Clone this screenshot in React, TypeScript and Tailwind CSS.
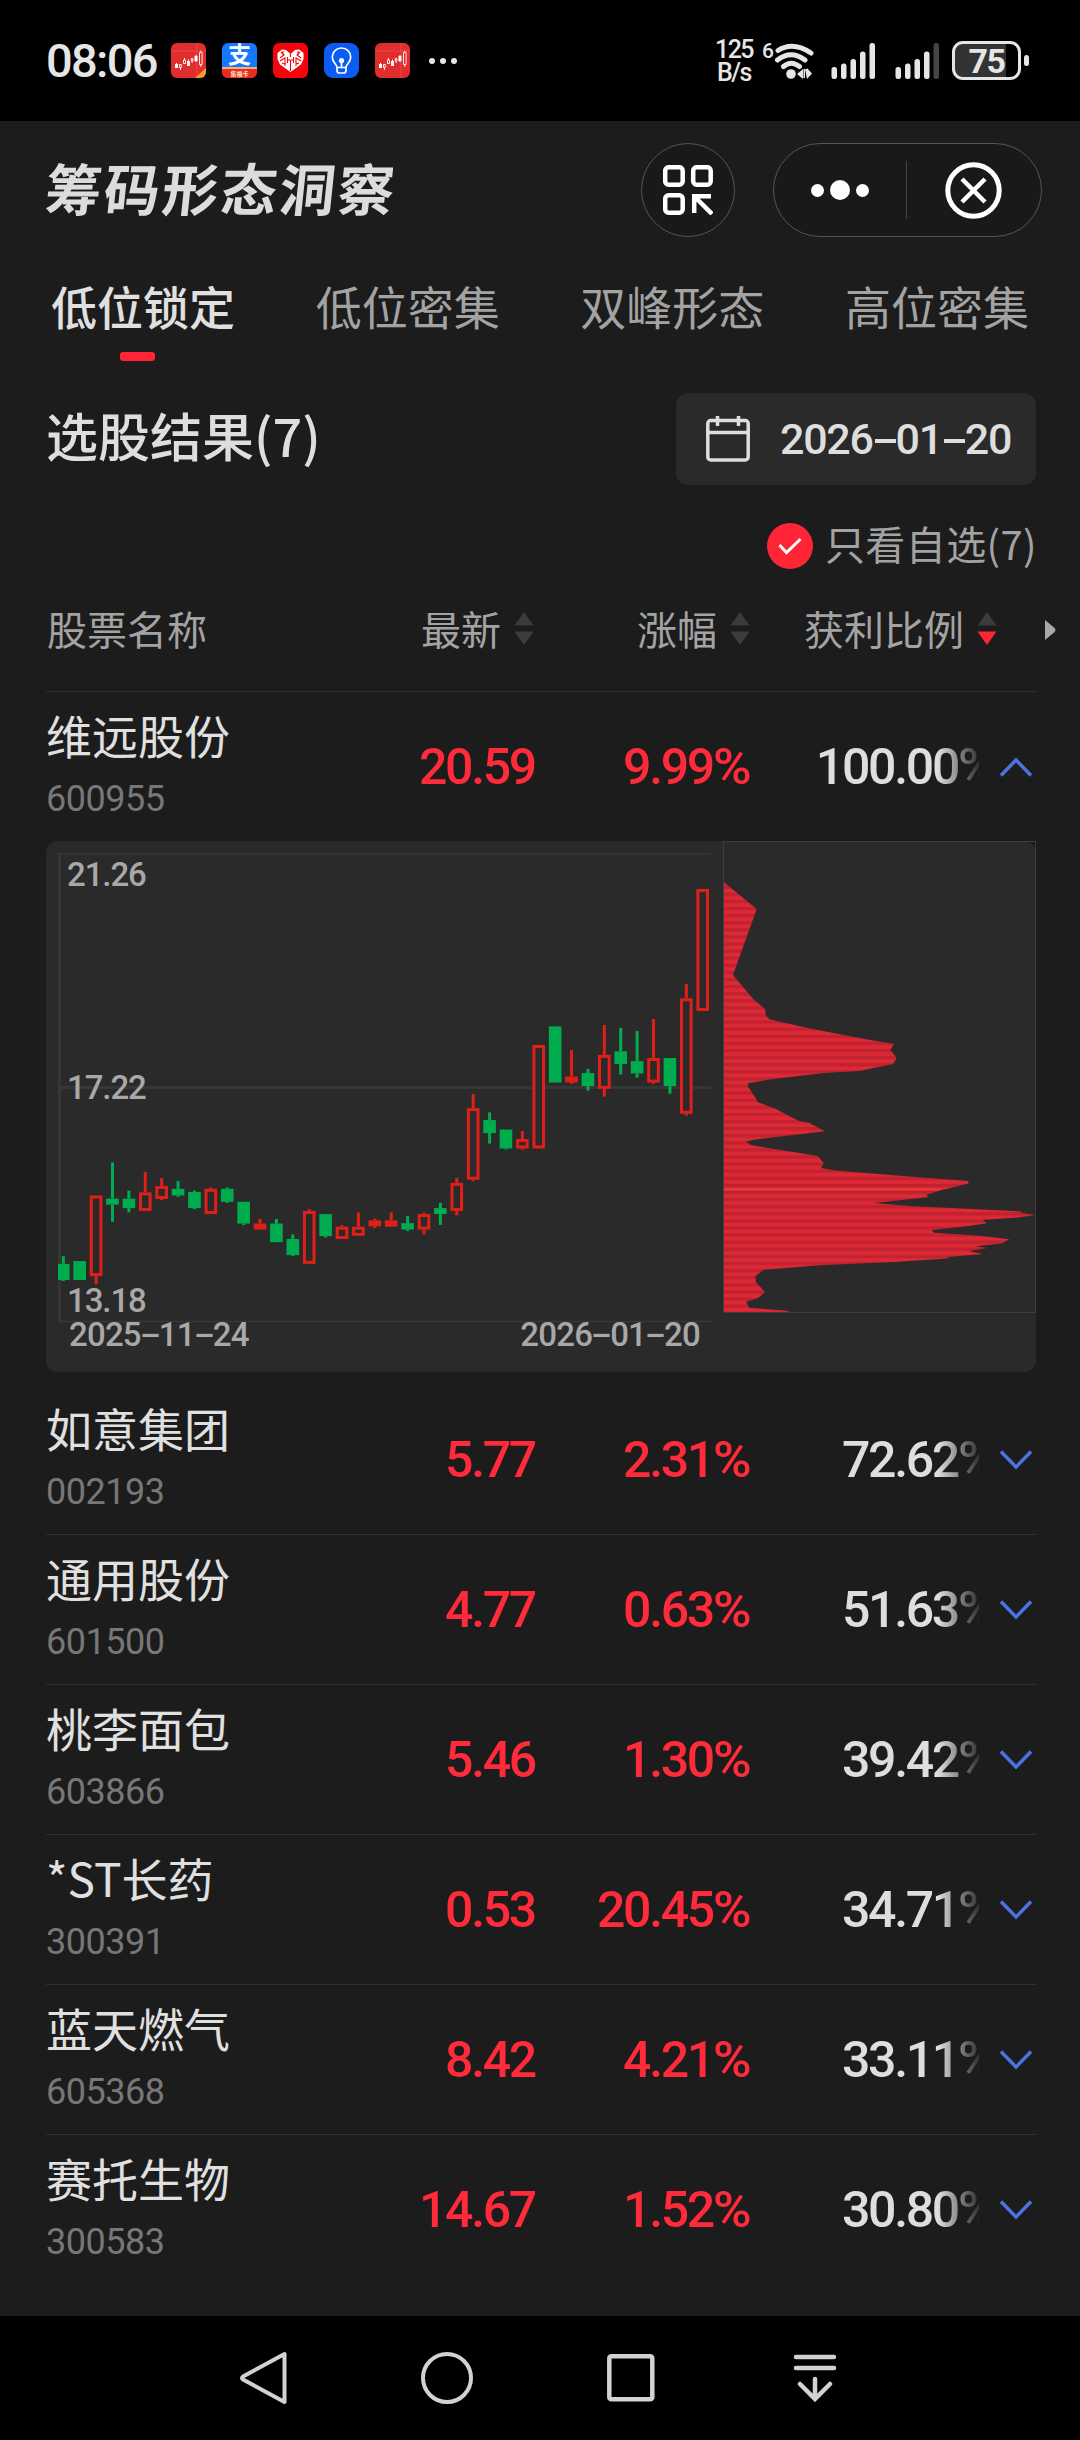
import { clsx } from 'clsx';

interface Stock {
    name: string;
    code: string;
    price: string;
    change: string;
    profit: string;
}

type Candle = ['up' | 'down', number, number, number, number];

const TABS = ['低位锁定', '低位密集', '双峰形态', '高位密集'];

const STOCKS: Stock[] = [
    { name: '维远股份', code: '600955', price: '20.59', change: '9.99', profit: '100.00' },
    { name: '如意集团', code: '002193', price: '5.77', change: '2.31', profit: '72.62' },
    { name: '通用股份', code: '601500', price: '4.77', change: '0.63', profit: '51.63' },
    { name: '桃李面包', code: '603866', price: '5.46', change: '1.30', profit: '39.42' },
    { name: '*ST长药', code: '300391', price: '0.53', change: '20.45', profit: '34.71' },
    { name: '蓝天燃气', code: '605368', price: '8.42', change: '4.21', profit: '33.11' },
    { name: '赛托生物', code: '300583', price: '14.67', change: '1.52', profit: '30.80' },
];

// direction, wick top, body top, body bottom, wick bottom
const CANDLES: Candle[] = [
    ['down', 1215, 1237, 1283, 1286],
    ['down', 1229, 1229, 1283, 1283],
    ['up', 1042, 1042, 1272, 1295],
    ['down', 948, 1051, 1068, 1117],
    ['down', 1028, 1051, 1078, 1090],
    ['up', 975, 1033, 1086, 1086],
    ['up', 992, 1015, 1052, 1055],
    ['down', 1001, 1023, 1042, 1046],
    ['down', 1028, 1032, 1078, 1081],
    ['up', 1019, 1023, 1095, 1095],
    ['down', 1019, 1023, 1060, 1063],
    ['down', 1060, 1060, 1122, 1126],
    ['up', 1109, 1122, 1139, 1139],
    ['down', 1109, 1122, 1175, 1175],
    ['down', 1153, 1166, 1212, 1215],
    ['up', 1081, 1086, 1237, 1237],
    ['down', 1095, 1095, 1158, 1162],
    ['up', 1126, 1131, 1166, 1166],
    ['up', 1090, 1131, 1157, 1157],
    ['up', 1108, 1113, 1130, 1135],
    ['up', 1090, 1113, 1131, 1131],
    ['down', 1100, 1121, 1139, 1143],
    ['up', 1091, 1095, 1139, 1153],
    ['down', 1063, 1078, 1095, 1126],
    ['up', 992, 1006, 1086, 1099],
    ['up', 753, 793, 997, 1001],
    ['down', 805, 827, 864, 894],
    ['down', 854, 854, 908, 911],
    ['up', 858, 881, 908, 911],
    ['up', 613, 613, 908, 908],
    ['down', 560, 560, 720, 720],
    ['up', 627, 703, 720, 724],
    ['down', 681, 693, 730, 743],
    ['up', 556, 641, 738, 760],
    ['down', 564, 631, 667, 697],
    ['down', 573, 659, 694, 706],
    ['up', 539, 650, 720, 724],
    ['down', 650, 650, 730, 752],
    ['up', 439, 480, 809, 814],
    ['up', 168, 168, 516, 516],
];

// outline of the chip distribution, width then depth
const CHIPS = [
    [41, 148], [140, 225], [69, 413], [132, 485], [165, 510], [168, 530], [180, 540], [300, 566], [480, 599],
    [552, 610], [541, 627], [560, 650], [549, 667], [448, 687], [340, 693], [180, 711], [114, 722], [114, 732],
    [133, 758], [144, 776], [195, 794], [265, 829], [295, 834], [345, 859], [130, 883], [108, 889], [124, 899],
    [323, 929], [341, 949], [333, 964], [375, 971], [560, 985], [774, 1001], [776, 1008], [690, 1028], [648, 1041],
    [657, 1046], [555, 1057], [491, 1063], [600, 1072], [800, 1081], [928, 1087], [938, 1092], [976, 1098],
    [925, 1105], [818, 1112], [831, 1121], [765, 1130], [665, 1140], [672, 1148], [810, 1157], [898, 1167],
    [876, 1179], [795, 1187], [831, 1192], [777, 1201], [820, 1209], [715, 1217], [712, 1222], [550, 1232],
    [330, 1241], [162, 1254], [137, 1271], [137, 1287], [165, 1318], [143, 1335], [108, 1345], [118, 1362],
    [236, 1371], [236, 1374], [41, 1374],
];

const toY = (v: number) => v / 2.851 - 11;
const chipPoints = CHIPS.map(([x, v]) => `${(664 + x / 3).toFixed(1)},${toY(v).toFixed(1)}`).join(' ');

function StockAppIcon({ badge }: { badge?: boolean }) {
    return (
        <svg width="35" height="35" viewBox="0 0 35 35">
            <rect width="35" height="35" rx="6" fill="#e22d2f" />
            <path d="M0 8h35M26 0v35" stroke="#ee5a58" strokeWidth="0.6" />
            <g fill="#fff">
                <path d="M4 21h3v4H4zM5 20h1v1H5zM16 18h3v5h-3zM17 16.500h1v2h-1zM23.500 13h3v5h-3zM24.500 12h1v7h-1z" />
            </g>
            <path d="M8.500 21.500h1.800v3h-1.800zM9.400 27v-2M12.500 17h2v3.500h-2zM13.500 17v-2M20.300 15.500h1.600v2.500h-1.600zM21.100 20v-2M28.500 9.500h2.600v12h-2.600zM29.800 9V7.500M29.800 22v2" fill="none" stroke="#fff" strokeWidth="0.900" />
            {badge && <path d="M35 25v4a6 6 0 0 1-6 6h-5z" fill="#f5a01e" />}
        </svg>
    );
}

function AlipayIcon() {
    return (
        <div className="flex h-[35px] w-[35px] flex-col overflow-hidden rounded-md bg-[#1677ff] text-center font-bold text-white">
            <div className="h-6 text-[23px] leading-[21px]">支</div>
            <div className="h-[11px] border-t-2 border-[#f0b27a] bg-[#ee2a1e] text-[6px] leading-[9px] text-[#ffe9c8]">集福卡</div>
        </div>
    );
}

function HeartIcon() {
    return (
        <svg width="35" height="35" viewBox="0 0 35 35">
            <rect width="35" height="35" rx="6" fill="#f5040c" />
            <path d="M17.500 29 7 21.500 4.500 16V10L9 6.500l4 .5 4.500 4 4.500-4 4-.5 4.500 3.500v6L28 21.500z" fill="#fff" />
            <path d="M17.500 10v4M14.500 14v6M20.500 14v6M17.500 17v11M14 17h7M8 9l3 3-4 3M27 9l-3 3 4 3M7 18l5-3v8M28 18l-5-3v8M10 8v4M25 8v4M9 20l3 1M26 20l-3 1" fill="none" stroke="#f5040c" strokeWidth="1.100" />
        </svg>
    );
}

function BulbIcon() {
    return (
        <svg width="35" height="35" viewBox="0 0 35 35">
            <rect width="35" height="35" rx="9" fill="#0b5cf5" />
            <g fill="none" stroke="#fff" strokeWidth="1.700">
                <path d="M13 24.500c0-3-4.700-5-4.700-10.300a9.200 9.200 0 0 1 18.400 0c0 5.300-4.700 7.300-4.700 10.300zM13 24.500v3q0 2.500 2.500 2.500h4q2.500 0 2.500-2.500v-3M17.500 18v6" />
            </g>
            <circle cx="17.500" cy="17.500" r="2.600" fill="#fff" />
        </svg>
    );
}

function SignalIcon({ weak }: { weak?: boolean }) {
    return (
        <svg width="45" height="36" viewBox="0 0 45 36" fill="#e6e6e6">
            <rect x="0.500" y="24" width="5.500" height="12" rx="2.500" />
            <rect x="10" y="20.500" width="5.500" height="15.500" rx="2.500" />
            <rect x="19.500" y="16" width="5.500" height="20" rx="2.500" />
            <rect x="29" y="8.500" width="5.500" height="27.500" rx="2.500" />
            <rect x="38.500" y="0" width="5.500" height="36" rx="2.500" fill={weak ? '#444' : '#e6e6e6'} />
        </svg>
    );
}

function StatusBar() {
    return (
        <div className="flex h-[121px] items-center bg-black pl-[46px] pr-[51px] text-[#e6e6e6]">
            <div className="w-[125px] whitespace-nowrap font-[Roboto] text-[47px] font-medium leading-[56px] tracking-[-1.7px]">08:06</div>
            <div className="flex gap-4">
                <StockAppIcon badge />
                <AlipayIcon />
                <HeartIcon />
                <BulbIcon />
                <StockAppIcon />
            </div>
            <div className="ml-[19px] mt-px flex gap-[5px]">
                <i className="h-1.5 w-1.5 rounded-full bg-[#e6e6e6]" />
                <i className="h-1.5 w-1.5 rounded-full bg-[#e6e6e6]" />
                <i className="h-1.5 w-1.5 rounded-full bg-[#e6e6e6]" />
            </div>
            <div className="ml-auto flex items-center">
                <div className="w-[42px] text-center font-[Roboto] text-[25px] font-medium leading-[23px] tracking-[-1.5px]">
                    <div>125</div>
                    <div>B/s</div>
                </div>
                <div className="mb-5 ml-[7px] w-[13px] font-[Roboto] text-[21px] font-medium leading-6">6</div>
                <svg width="40" height="36" viewBox="0 0 40 36" fill="none" stroke="#e6e6e6" strokeWidth="5" strokeLinecap="round">
                    <path d="M3 7.500Q18 -2 36 10M2.500 17Q16 6.500 30 17M8.500 23.500Q16 17 24.500 23.500" />
                    <circle cx="16" cy="31" r="4.800" fill="#e6e6e6" stroke="none" />
                    <path d="M22 31l6-5v10zM30 26h2v-1l5 5.500-5 5.500zM28.500 26h1.500v9h-1.500z" fill="#e6e6e6" stroke="none" />
                </svg>
                <div className="ml-4 flex gap-[19px]">
                    <SignalIcon />
                    <SignalIcon weak />
                </div>
                <div className="ml-3 flex h-[39px] w-[69px] items-center rounded-[11px] border-[3px] border-[#e6e6e6] bg-[linear-gradient(90deg,#333_51px,#000_51px)]">
                    <span className="w-[63px] text-center font-[Roboto] text-[34px] font-bold leading-none tracking-[-1.5px]">75</span>
                </div>
                <i className="ml-[3px] h-[11px] w-[5px] rounded-sm bg-[#e6e6e6]" />
            </div>
        </div>
    );
}

function TitleBar() {
    return (
        <div className="flex h-[138px] items-center pl-[46px] pr-[38px]">
            <h1 className="mb-1.5 -skew-x-6 text-[56px] font-bold leading-[68px] tracking-[2.5px] text-[#dcdcdc]">筹码形态洞察</h1>
            <button className="ml-auto flex h-[94px] w-[94px] items-center justify-center rounded-full border border-[#555] bg-[#191919]">
                <svg width="50" height="50" viewBox="0 0 50 50" fill="none" stroke="#fff" strokeWidth="4.500">
                    <rect x="2.200" y="2.200" width="17.500" height="17.500" rx="3.500" />
                    <rect x="30.200" y="2.200" width="17.500" height="17.500" rx="3.500" />
                    <rect x="2.200" y="30.200" width="17.500" height="17.500" rx="3.500" />
                    <path d="M31.200 48V31.200H48M32 32l17 17" />
                </svg>
            </button>
            <div className="ml-[38px] flex h-[94px] w-[269px] items-center rounded-full border border-[#555] bg-[#191919]">
                <div className="flex w-[132px] items-center justify-center gap-1.5">
                    <i className="h-[13px] w-[13px] rounded-full bg-white" />
                    <i className="h-5 w-5 rounded-full bg-white" />
                    <i className="h-[13px] w-[13px] rounded-full bg-white" />
                </div>
                <div className="h-[58px] w-px bg-[#444]" />
                <div className="flex w-[132px] justify-center">
                    <svg width="57" height="57" viewBox="0 0 57 57" fill="none" stroke="#fff" strokeWidth="5">
                        <circle cx="28.500" cy="28.500" r="25.700" />
                        <path d="M17 17l23 23M40 17L17 40" strokeWidth="4.500" />
                    </svg>
                </div>
            </div>
        </div>
    );
}

function SortArrows({ desc }: { desc?: boolean }) {
    return (
        <svg width="20" height="33" viewBox="0 0 20 33">
            <path d="M10 0l9.500 13.500H.5z" fill="#3c3c3c" />
            <path d="M.5 19.500h19L10 33z" fill={desc ? '#ff2436' : '#3c3c3c'} />
        </svg>
    );
}

function DateLabel({ value, className, dash }: { value: string; className: string; dash: string }) {
    return (
        <span className={clsx('flex items-center whitespace-nowrap font-[Roboto]', className)}>
            {value.split('-').map((part, i) => (
                <span key={i} className="flex items-center">
                    {i > 0 && <span className={clsx('inline-block scale-x-[1.900] text-center', dash)}>-</span>}
                    {part}
                </span>
            ))}
        </span>
    );
}

function ChipChart() {
    return (
        <div className="relative mb-[13px] h-[531px] w-[990px]">
            <svg width="990" height="531" viewBox="0 0 990 531">
                <defs>
                    <pattern id="stripes" y="2" width="8" height="7.100" patternUnits="userSpaceOnUse">
                        <rect width="8" height="7.100" fill="#dd2836" />
                        <rect width="8" height="3.300" fill="#c1222f" />
                    </pattern>
                </defs>
                <rect width="990" height="531" rx="12" fill="#2a2a2a" />
                <path d="M12 13H665M12 480.500H665" stroke="#383838" strokeWidth="1.500" />
                <path d="M12 246.400H665M13.500 12.500V481" stroke="#363636" strokeWidth="3" />
                {CANDLES.map(([dir, high, top, bottom, low], i) => {
                    const x = 17.300 + i * 16.395;
                    const left = i === 0 ? 12 : x - 6.300;
                    const up = dir === 'up';
                    const color = up ? '#e02018' : '#00ad4e';
                    const y = toY(top);
                    const h = toY(bottom) - y;
                    return (
                        <g key={i} fill={color}>
                            <rect x={x - 1.500} y={toY(high)} width={3} height={toY(top) - toY(high)} />
                            <rect x={x - 1.500} y={toY(bottom)} width={3} height={toY(low) - toY(bottom)} />
                            <rect x={left} y={y} width={x + 6.300 - left} height={h} />
                            {up && h > 7 && <rect x={left + 3} y={y + 3} width={6.600} height={h - 6} fill="#2a2a2a" />}
                        </g>
                    );
                })}
                <polygon points={chipPoints} fill="url(#stripes)" />
                <path d="M678 348.300H894" stroke="#f0452f" strokeWidth="1.300" />
                <rect x="677.500" y="0.500" width="312" height="471" fill="none" stroke="#3e3e3e" />
            </svg>
            {/* axis labels over the plot */}
            <div className="absolute inset-0 font-[Roboto] text-[33px] font-medium leading-[33px] tracking-[-1.1px] text-[#a8a8a8]">
                <span className="absolute left-[21px] top-[17px]">21.26</span>
                <span className="absolute left-[21px] top-[230px]">17.22</span>
                <span className="absolute left-[21px] top-[443px]">13.18</span>
                <div className="absolute left-[23px] top-[477px] flex w-[631px] justify-between">
                    <DateLabel value="2025-11-24" className="text-[33px] tracking-[-0.8px]" dash="w-[18px]" />
                    <DateLabel value="2026-01-20" className="text-[33px] tracking-[-0.8px]" dash="w-[18px]" />
                </div>
            </div>
        </div>
    );
}

function Percent({ value }: { value: string }) {
    return (
        <>
            {value}
            <span className="inline-block w-[39px] origin-left scale-x-105 text-left">%</span>
        </>
    );
}

function StockRow({ stock, open, last }: { stock: Stock; open: boolean; last: boolean }) {
    return (
        <>
            <div
                className={clsx(
                    'flex w-[990px] items-center font-[Roboto] text-[50px] font-medium leading-[60px] tracking-[-2.3px] text-[#ff2b3a]',
                    open ? 'h-[149px]' : 'h-[150px] border-b',
                    last ? 'border-[#1f1f1f]' : 'border-[#303030]'
                )}
            >
                <div className="mb-2.5 w-[260px] font-['Noto_Sans_CJK_SC',sans-serif] tracking-normal">
                    <div className="text-[46px] font-normal leading-[60px] text-[#e0e0e0]">{stock.name}</div>
                    <div className="mt-3.5 font-[Roboto] text-4xl font-normal leading-[42px] tracking-[-0.5px] text-[#777]">{stock.code}</div>
                </div>
                <div className="w-[229px] text-right">{stock.price}</div>
                <div className="w-[217px] text-right"><Percent value={stock.change} /></div>
                <div className="flex w-[227px] overflow-hidden text-[#dedede] [mask-image:linear-gradient(90deg,#000_186px,#0006_214px,#0002_226px)]">
                    <div className="w-[245px] shrink-0 text-right"><Percent value={stock.profit} /></div>
                </div>
                <svg className="ml-5" width="34" height="22" viewBox="0 0 34 22" fill="none" stroke="#4b73e0" strokeWidth="3.500">
                    <path d={open ? 'M2 19.500L17 4l15 15.500' : 'M2 2.500L17 18 32 2.500'} />
                </svg>
            </div>
            {open && <ChipChart />}
        </>
    );
}

function NavBar() {
    return (
        <div className="flex h-[124px] items-center bg-black pl-[171px]">
            <div className="flex w-[184px] justify-center">
                <svg width="50" height="54" viewBox="0 0 50 54" fill="none" stroke="#d2d2d2" strokeWidth="4" strokeLinejoin="round">
                    <path d="M46.500 3v48L5 28.500q-2-1.500 0-3z" />
                </svg>
            </div>
            <div className="flex w-[184px] justify-center">
                <svg width="52" height="52" viewBox="0 0 52 52" fill="none" stroke="#d2d2d2" strokeWidth="4">
                    <circle cx="26" cy="26" r="24" />
                </svg>
            </div>
            <div className="flex w-[184px] justify-center">
                <svg width="48" height="48" viewBox="0 0 48 48" fill="none" stroke="#d2d2d2" strokeWidth="4.500">
                    <rect x="2.300" y="2.300" width="43" height="43" rx="2" />
                </svg>
            </div>
            <div className="flex w-[184px] justify-center">
                <svg width="48" height="48" viewBox="0 0 48 48" fill="none" stroke="#d2d2d2" strokeWidth="4.500" strokeLinecap="round">
                    <path d="M5 3h38M5 14h38M24 25v19M9 30l15 15 15-15" />
                </svg>
            </div>
        </div>
    );
}

export default function App() {
    return (
        <div className="flex h-[2440px] w-[1080px] flex-col overflow-hidden bg-[#1c1c1c] font-['Noto_Sans_CJK_SC',sans-serif] text-[#a3a3a3]">
            <StatusBar />
            <TitleBar />

            <div className="flex h-[112px] justify-between px-[51px] pt-[15px] text-[46px] leading-[62px]">
                {TABS.map((tab, i) => (
                    <div key={tab} className={clsx(i === 0 && 'font-medium text-[#e0e0e0]')}>
                        {tab}
                        {i === 0 && <div className="ml-[69px] mt-4 h-[9px] w-[35px] rounded-[3px] bg-[#ff2436]" />}
                    </div>
                ))}
            </div>

            <div className="mt-[22px] flex h-[92px] items-center justify-between pl-[46px] pr-11">
                <h2 className="mb-2 text-[52px] font-medium leading-[64px] text-[#dedede]">选股结果(7)</h2>
                <div className="flex h-[92px] w-[360px] items-center rounded-xl bg-[#2a2a2a] pl-[30px] text-[#dedede]">
                    <svg width="44" height="46" viewBox="0 0 44 46" fill="none" stroke="#dedede" strokeWidth="3.500">
                        <rect x="1.800" y="4.500" width="40.400" height="39.500" rx="3" />
                        <path d="M2 16.500h40M11.500 0v10M32.500 0v10" />
                    </svg>
                    <DateLabel value="2026-01-20" className="ml-[30px] text-[43px] font-medium leading-[50px] tracking-[-1.3px]" dash="w-[23px]" />
                </div>
            </div>

            <div className="flex h-[122px] items-center justify-end pr-[43px]">
                <div className="flex h-[46px] w-[46px] items-center justify-center rounded-full bg-[#ff2436]">
                    <svg width="24" height="18" viewBox="0 0 24 18" fill="none" stroke="#fff" strokeWidth="3">
                        <path d="M1.500 8l7 7.500L22.500 2" />
                    </svg>
                </div>
                <span className="mb-1.5 ml-3 text-[40px] leading-[50px] tracking-[0.4px]">只看自选(7)</span>
            </div>

            <div className="-mt-0.5 flex h-[86px] w-[1080px] pl-[47px] text-[40px] leading-[46px]">
                <div className="w-[374px]">股票名称</div>
                <div className="flex w-[216px] items-center gap-[13px] self-start">最新<SortArrows /></div>
                <div className="flex w-[167px] items-center gap-[13px] self-start">涨幅<SortArrows /></div>
                <div className="flex w-[241px] items-center gap-[13px] self-start">获利比例<SortArrows desc /></div>
                <svg className="mt-[15px]" width="11" height="20" viewBox="0 0 11 20">
                    <path d="M0 0l9 7.500q3 2.500 0 5L0 20z" fill="#a8a8a8" />
                </svg>
            </div>
            <div className="ml-[46px] w-[990px]">
                <div className="h-px bg-[#303030]" />
                {STOCKS.map((stock, i) => (
                    <StockRow key={stock.code} stock={stock} open={i === 0} last={i === STOCKS.length - 1} />
                ))}
            </div>

            <div className="mt-auto">
                <NavBar />
            </div>
        </div>
    );
}
